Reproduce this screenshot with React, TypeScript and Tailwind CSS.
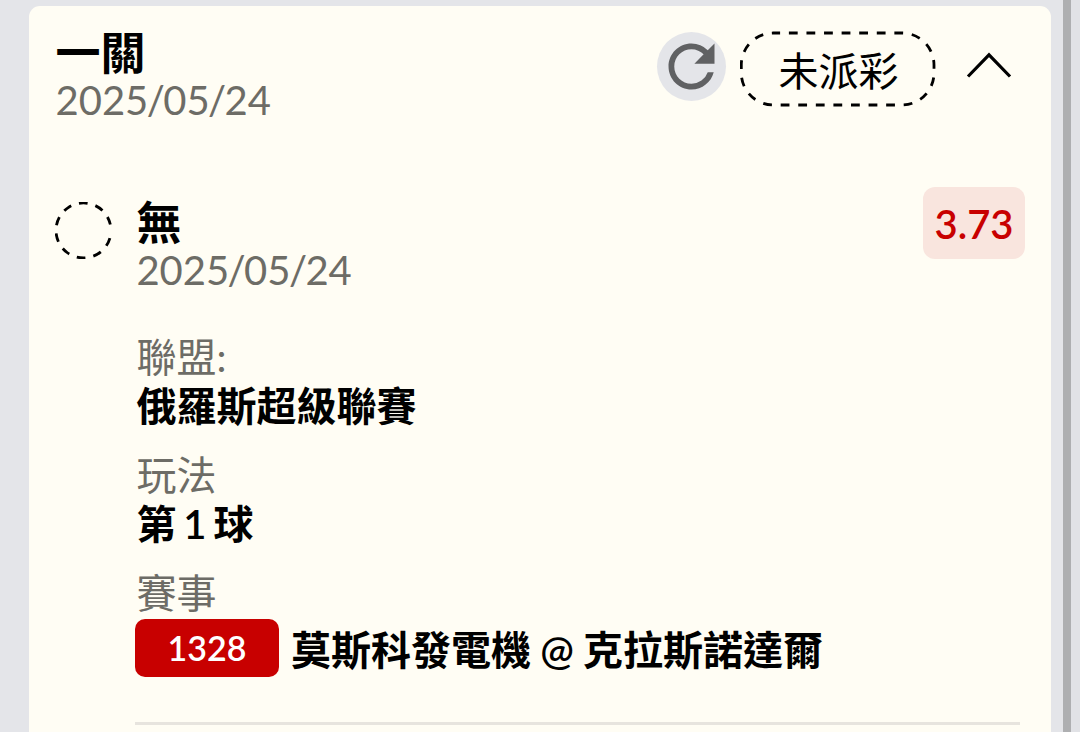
import React from 'react';
import { MdRefresh } from 'react-icons/md';

interface FieldProps {
    label: string;
    children: React.ReactNode;
}

const Field: React.FC<FieldProps> = ({ label, children }) => (
    <div>
        <p className="h-[48px] leading-[48px] text-[#6d6c66]">{label}</p>
        {children}
    </div>
);

const DateText: React.FC<{ value: string }> = ({ value }) => (
    <p className="leading-[49px] text-[#6d6c66]">
        {value.split('/').map((part, idx) => (
            <React.Fragment key={idx}>
                {idx > 0 && <span className="-mx-[1.6px]">/</span>}
                {part}
            </React.Fragment>
        ))}
    </p>
);

const PendingCircle: React.FC = () => (
    <svg className="mt-[4px] h-[57px] w-[57px] shrink-0" viewBox="0 0 57 57" fill="none">
        <path d="M54.9 36.1A27.5 27.5 0 1 1 55.35 22.55" stroke="#000" strokeWidth="2.8" strokeDasharray="8.6 8.12" />
    </svg>
);

const StatusPill: React.FC<{ text: string }> = ({ text }) => (
    <div className="relative ml-[14px] flex h-[76px] w-[197px] items-center justify-center">
        <svg className="absolute inset-0" width="197" height="76" viewBox="0 0 197 76" fill="none">
            <path
                d="M33.3 2H162A32 32 0 0 1 194 34V42A32 32 0 0 1 162 74H33.3A32 32 0 0 1 1.3 42V34A32 32 0 0 1 33.3 2Z"
                stroke="#000"
                strokeWidth="2.8"
                strokeDasharray="8.8 8.78"
                strokeDashoffset="2"
            />
        </svg>
        <span className="pt-[4px] leading-[48px]">{text}</span>
    </div>
);

const BetHeader: React.FC = () => (
    <div className="flex items-start justify-between">
        <div className="pl-[0.5px]">
            <h2 className="h-[48px] text-[45px] font-semibold leading-[50px]">一關</h2>
            <DateText value="2025/05/24" />
        </div>
        <div className="flex pt-[3px]">
            <button className="mt-px flex h-[69px] w-[69px] items-center justify-center rounded-full bg-[#e4e5e9] text-[#606163]">
                <MdRefresh size={69} />
            </button>
            <StatusPill text="未派彩" />
            <svg className="ml-[29px] mr-[13px] mt-[20px]" width="46" height="28" viewBox="0 0 46 28" fill="none">
                <path d="M2 25.5L23 3.8L44 25.5" stroke="#000" strokeWidth="3.2" />
            </svg>
        </div>
    </div>
);

const BetItem: React.FC = () => (
    <div className="mt-[73px] flex items-start">
        <PendingCircle />
        <div className="ml-[24.4px] flex-1">
            <div className="flex items-start justify-between">
                <div>
                    <h3 className="h-[48px] text-[45px] font-semibold leading-[50px]">無</h3>
                    <DateText value="2025/05/24" />
                </div>
                <span className="-mt-[11px] flex h-[72px] w-[102px] items-center justify-center rounded-xl bg-[#f9e5de] pt-[2px] font-semibold text-[#c80000]">
                    3.73
                </span>
            </div>
            <div className="mt-[38px] flex flex-col gap-[20px]">
                <Field label="聯盟:">
                    <p className="h-[50px] font-semibold leading-[50px]">俄羅斯超級聯賽</p>
                </Field>
                <Field label="玩法">
                    <p className="h-[50px] font-semibold leading-[50px] [word-spacing:-3px]">第 1 球</p>
                </Field>
                <Field label="賽事">
                    <div className="-ml-[1.4px] flex items-center pt-[2px] font-semibold">
                        <span className="flex h-[58px] w-[144px] items-center justify-center rounded-[10px] bg-[#c80000] text-[34px] leading-[40px] text-white">
                            1328
                        </span>
                        <span className="ml-[11.9px] pt-[3px] leading-[50px] [word-spacing:-0.7px]">莫斯科發電機 @ 克拉斯諾達爾</span>
                    </div>
                </Field>
            </div>
            <div className="-ml-[1.4px] mr-[5px] mt-[45px] h-[3px] bg-[#e7e4de]" />
        </div>
    </div>
);

export default function App() {
    return (
        <div className="flex h-[732px] w-[1080px] overflow-hidden bg-[#e4e5e9] font-['Lato','Noto_Sans_CJK_TC',sans-serif] text-[40px] text-black">
            <div className="ml-[29px] mt-[6px] w-[1022px] rounded-t-[11px] bg-[#fffdf4] pl-[26px] pr-[26px] pt-[22px]">
                <BetHeader />
                <BetItem />
            </div>
            <div className="ml-[12px] w-[8px] bg-[#aeafb1]" />
            <div className="flex-1 bg-[#e1e2e6]" />
        </div>
    );
}
